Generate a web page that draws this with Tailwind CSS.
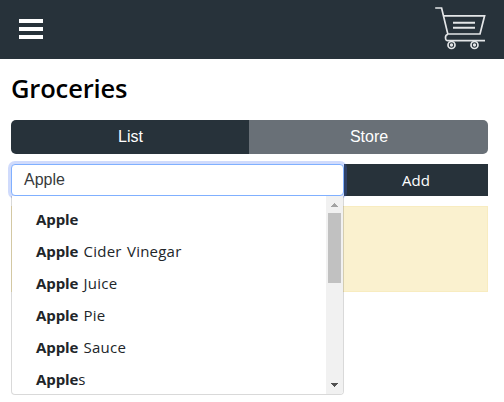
<!DOCTYPE html>
<html lang="en">
<head>
<meta charset="utf-8">
<title>Groceries</title>
<script src="https://cdn.jsdelivr.net/npm/@tailwindcss/browser@4"></script>
</head>
<body class="h-[402px] overflow-hidden bg-white font-['Trebuchet_MS','Open_Sans',sans-serif] text-[#212529]">
  <header class="flex h-[59px] justify-between bg-[#27323a] pl-[19px] pr-[18px]">
    <button class="flex h-5 w-6 flex-col justify-between mt-[19px]" aria-label="Menu">
      <span class="h-1 w-full bg-white"></span>
      <span class="h-1 w-full bg-white"></span>
      <span class="h-1 w-full bg-white"></span>
    </button>
    <svg class="mt-[6px] h-[44px] w-[52px]" viewBox="0 0 52 44" fill="none" stroke="#e4e6e8" stroke-width="1.7">
      <path d="M1.2 2H7.6L13.8 28H46L50.6 9.8H10.2"/>
      <path d="M14 28.5C11.6 28.5 11.5 30 11.5 31.500C11.500 34 12 34.700 14 34.700H51"/>
      <path d="M19 16.700H41M19 21.700H41" stroke-width="2"/>
      <circle cx="17.500" cy="39" r="3.500"/>
      <circle cx="40.500" cy="39" r="3.500"/>
      <circle cx="17.500" cy="39" r=".8"/>
      <circle cx="40.500" cy="39" r=".8"/>
    </svg>
  </header>
  <main class="pl-[11px] pr-4">
    <h1 class="mt-[13px] h-12 text-[25.500px] leading-[33px] font-semibold tracking-[-0.15px] text-black">Groceries</h1>
    <div class="grid h-[34px] grid-cols-[238px_1fr] overflow-hidden rounded-[5px] text-center font-['Liberation_Sans',sans-serif] text-base leading-[32px] text-white">
      <button class="bg-[#27323a] pl-px">List</button>
      <button class="bg-[#697077] pl-px">Store</button>
    </div>
    <div class="relative mt-[10px] flex h-8">
      <div class="z-10 w-[333px] rounded-[4px] border border-[#80b0ff] bg-white pl-3 font-['Liberation_Sans',sans-serif] text-base leading-[30px] text-[#373a3c] shadow-[0_0_0_3px_rgba(66,112,244,0.25)]">Apple</div>
      <button class="flex-1 bg-[#27323a] text-[15px] font-medium leading-8 text-white">Add</button>
      <div class="absolute left-0 top-8 z-20 flex h-[199px] w-[333px] overflow-hidden rounded-b-[4px] border border-t-0 border-black/15 bg-white bg-clip-padding">
        <ul class="flex-1 pl-6 pt-[7px] text-[15px] leading-8 tracking-[0.22px] [word-spacing:1.2px]">
          <li><b class="font-bold tracking-[-0.1px]">Apple</b></li>
          <li><b class="font-bold tracking-[-0.1px]">Apple</b> Cider Vinegar</li>
          <li><b class="font-bold tracking-[-0.1px]">Apple</b> Juice</li>
          <li><b class="font-bold tracking-[-0.1px]">Apple</b> Pie</li>
          <li><b class="font-bold tracking-[-0.1px]">Apple</b> Sauce</li>
          <li><b class="font-bold tracking-[-0.1px]">Apple</b>s</li>
        </ul>
        <div class="flex w-[17px] flex-col items-center bg-[#f1f1f1]">
          <svg class="mt-[7px] h-1 w-[7px]" viewBox="0 0 7 4" fill="#a3a3a3" shape-rendering="crispEdges"><path d="M3 0h1v1h1v1h1v1h1v1H0V3h1V2h1V1h1z"/></svg>
          <div class="mt-[6px] h-[70px] w-[13px] bg-[#c1c1c1]"></div>
          <svg class="mt-auto mb-[7px] h-1 w-[7px]" viewBox="0 0 7 4" fill="#505050" shape-rendering="crispEdges"><path d="M0 0h7v1H6v1H5v1H4v1H3V3H2V2H1V1H0z"/></svg>
        </div>
      </div>
    </div>
    <div class="mt-[10px] h-[86px] border border-[#f8ecc0] bg-[#faf1cf]"></div>
  </main>
</body>
</html>
